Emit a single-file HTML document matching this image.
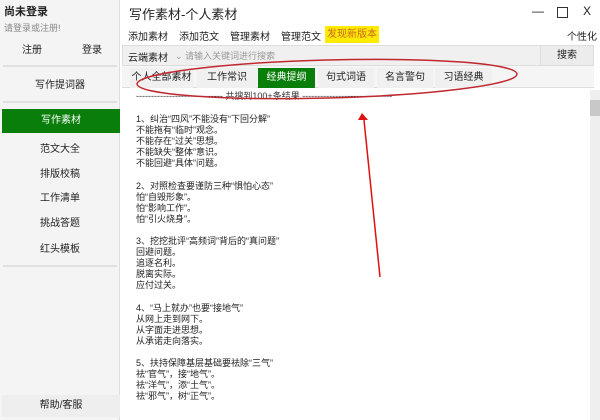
<!DOCTYPE html>
<html><head><meta charset="utf-8"><style>
*{margin:0;padding:0;box-sizing:border-box}
body{width:600px;height:420px;overflow:hidden;background:#fff;font-family:"Liberation Sans","Noto Sans CJK SC",sans-serif;font-size:10px;color:#222;position:relative}
.a{position:absolute;white-space:nowrap}
#side{position:absolute;left:0;top:0;width:120px;height:420px;background:#f4f4f4;border-right:1px solid #ddd}
.c{text-align:center;width:120px;left:0}
.sep{position:absolute;left:3px;width:114px;height:2px;background:#e0e0e0}
</style></head><body>
<div id="side">
<div class="a" style="left:4px;top:3px;font-size:11px;font-weight:bold">尚未登录</div>
<div class="a" style="left:4px;top:21px;color:#888;font-size:9px">请登录或注册!</div>
<div class="a" style="left:22px;top:41px">注册</div>
<div class="a" style="left:82px;top:41px">登录</div>
<div class="sep" style="top:65px"></div>
<div class="a c" style="top:76px">写作提词器</div>
<div class="sep" style="top:101px"></div>
<div class="a" style="left:2px;top:109px;width:118px;height:24px;background:#0a7e0a;color:#fff;text-align:center;line-height:24px">写作素材</div>
<div class="a c" style="top:140px">范文大全</div>
<div class="a c" style="top:165px">排版校稿</div>
<div class="a c" style="top:189px">工作清单</div>
<div class="a c" style="top:214px">挑战答题</div>
<div class="a c" style="top:240px">红头模板</div>
<div class="sep" style="top:265px"></div>
<div class="a" style="left:2px;top:395px;width:118px;height:22px;background:#eee;text-align:center;line-height:22px">帮助/客服</div>
</div>
<div class="a" style="left:129px;top:4px;font-size:13px">写作素材-个人素材</div>
<div class="a" style="left:532px;top:4px;font-size:12px">—</div>
<div class="a" style="left:557px;top:7px;width:11px;height:11px;border:1px solid #333"></div>
<div class="a" style="left:583px;top:4px;font-size:12px">X</div>
<div class="a" style="left:128px;top:28px">添加素材</div>
<div class="a" style="left:179px;top:28px">添加范文</div>
<div class="a" style="left:230px;top:28px">管理素材</div>
<div class="a" style="left:281px;top:28px">管理范文</div>
<div class="a" style="left:325px;top:26px;width:54px;height:17px;background:#ffea00;color:#c62;text-align:center;line-height:17px">发现新版本</div>
<div class="a" style="left:567px;top:28px">个性化</div>
<div class="a" style="left:122px;top:45px;width:472px;height:21px;background:#f0f0f0;border:1px solid #ddd"></div>
<div class="a" style="left:128px;top:49px">云端素材</div>
<div class="a" style="left:175px;top:49px;color:#999;font-size:9px">⌄ 请输入关键词进行搜索</div>
<div class="a" style="left:540px;top:46px;width:53px;height:19px;background:#ececec;border-left:1px solid #ddd;text-align:center;line-height:19px">搜索</div>
<div class="a" style="left:122px;top:66px;width:472px;height:22px;background:#f5f5f5;border-bottom:1px solid #ddd"></div>
<div class="a" style="left:130px;top:68px;width:63px;height:20px;background:#f0f0f0;text-align:center;line-height:20px">个人全部素材</div>
<div class="a" style="left:197px;top:68px;width:60px;height:20px;background:#f0f0f0;text-align:center;line-height:20px">工作常识</div>
<div class="a" style="left:258px;top:68px;width:57px;height:20px;background:#0a7e0a;color:#fff;text-align:center;line-height:20px">经典提纲</div>
<div class="a" style="left:318px;top:68px;width:56px;height:20px;background:#f0f0f0;text-align:center;line-height:20px">句式词语</div>
<div class="a" style="left:377px;top:68px;width:56px;height:20px;background:#f0f0f0;text-align:center;line-height:20px">名言警句</div>
<div class="a" style="left:435px;top:68px;width:57px;height:20px;background:#f0f0f0;text-align:center;line-height:20px">习语经典</div>
<div class="a" style="left:136px;top:89px;font-size:9px;color:#333">----------------------------- 共搜到100+条结果 ------------------------------</div>
<div class="a" style="left:136px;top:114px;line-height:11.1px;font-size:9px">
1、纠治“四风”不能没有“下回分解”<br>不能拖有“临时”观念。<br>不能存在“过关”思想。<br>不能缺失“整体”意识。<br>不能回避“具体”问题。<br><br>
2、对照检查要谨防三种“惧怕心态”<br>怕“自毁形象”。<br>怕“影响工作”。<br>怕“引火烧身”。<br><br>
3、挖挖批评“高频词”背后的“真问题”<br>回避问题。<br>追逐名利。<br>脱离实际。<br>应付过关。<br><br>
4、“马上就办”也要“接地气”<br>从网上走到网下。<br>从字面走进思想。<br>从承诺走向落实。<br><br>
5、扶持保障基层基础要祛除“三气”<br>祛“官气”，接“地气”。<br>祛“洋气”，添“土气”。<br>祛“邪气”，树“正气”。</div>
<div class="a" style="left:590px;top:90px;width:10px;height:330px;background:#efefef"></div>
<div class="a" style="left:590px;top:100px;width:10px;height:16px;background:#c8c8c8"></div>
<svg class="a" style="left:0;top:0" width="600" height="420">
<ellipse cx="327" cy="79" rx="190" ry="19" transform="rotate(-1.5 327 79)" fill="none" stroke="#c0282f" stroke-width="1.5"/>
<line x1="380" y1="277" x2="364" y2="120" stroke="#e01010" stroke-width="1.5"/>
<polygon points="362,113 358,120 368,120" fill="#e01010"/>
</svg>
</body></html>
